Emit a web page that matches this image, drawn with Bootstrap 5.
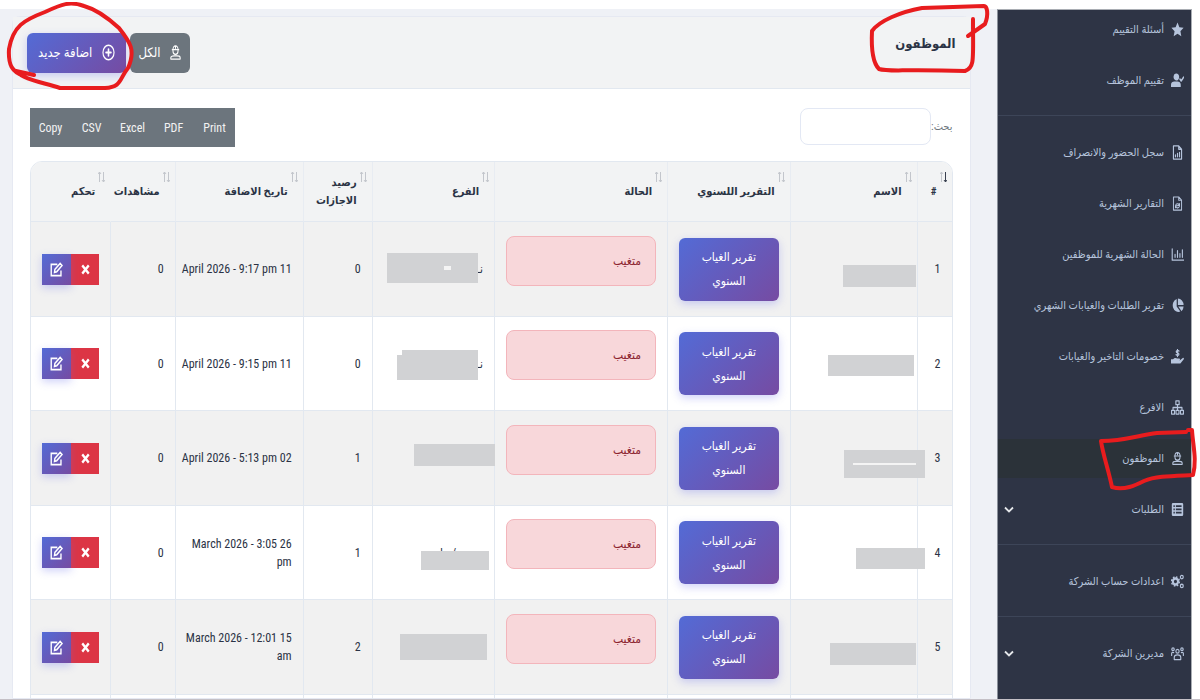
<!DOCTYPE html>
<html lang="ar" dir="rtl">
<head>
<meta charset="utf-8">
<meta name="viewport" content="width=device-width, initial-scale=1">
<title>الموظفون</title>
<link href="https://cdn.jsdelivr.net/npm/bootstrap@5.3.0/dist/css/bootstrap.min.css" rel="stylesheet">
<style>
:root{--ink:#2b3345;--line:#e2e8f0;--side:#2e3445;--grad:linear-gradient(135deg,#536bd6,#764ba2)}
body{font-family:"Roboto Condensed","Open Sans Condensed",Roboto,"DejaVu Sans Condensed","DejaVu Sans",sans-serif;font-size:12px;line-height:18px;color:var(--ink);background:#fff}
.app{height:100vh;overflow:hidden;padding-top:9px;padding-right:8px;border-bottom:1px solid #c4c0c6}
.side{width:16.4%;background:var(--side);border-top:1px solid #a9adb3;border-left:1px solid #8b919b;border-right:1px solid #a9adb3}
.side a{height:39px;margin-bottom:12px;padding:0 7px 0 6px;gap:7px;color:#b6c4dc;text-decoration:none;font-size:11px;white-space:nowrap}
.side a.active{background:#2b3239}
.side hr{margin:15px 0 17px;border-top:1px solid #3d4558;opacity:1}
.side svg.ico{width:13px;height:15px;flex:none}
.ico{fill:none;stroke:currentColor;stroke-width:1.4;stroke-linejoin:round;stroke-linecap:round}
.ico .f{fill:currentColor;stroke:none}
.main{background:#eff1f6;padding:7px 26px 0 12px;min-width:0}
.panel{border:1px solid #e6e9f2;border-radius:8px 8px 0 0;height:100%}
.panel-head{background:#f2f3f4;border-bottom:1px solid var(--line);height:72px;padding:0 14px}
.panel-title{font-size:13px;font-weight:700;line-height:20px;margin-top:-18px}
.hbtn{height:40px;border:0;border-radius:6px;color:#fff;font-size:13px;white-space:nowrap;padding:0 11px;gap:10px}
.hbtn.grey{padding:0 8px;gap:8px}
.hbtn svg.ico{width:13px;height:17px}
.grey{background:#6c757d}
.grad{background:var(--grad);box-shadow:0 3px 8px rgba(102,110,234,.3);color:#fff}
.panel-content{padding:19px 17px 0}
.find-label{font-size:11px}
.find{width:131px;height:37px;border:1px solid #e3e8f4;border-radius:8px}
.exports button{height:39px;width:41px;border:0;background:#6c757d;color:#f2f2f2;padding:0}
.staff{table-layout:fixed;border-collapse:separate;border-spacing:0;border:1px solid var(--line);border-radius:12px 12px 0 0;overflow:hidden;margin-top:14px}
.staff th{height:60px;background:#f2f3f4;font-size:11px;font-weight:700;padding:0 15px;vertical-align:middle;position:relative;border-bottom:1px solid var(--line);border-left:1px solid #e8ecf2;line-height:18px}
.staff th:last-child,.staff td:last-child{border-left:0}
.staff th:nth-child(8){border-left-color:#f2f3f4}
.staff th svg{position:absolute;top:9px;right:5px;width:7px;height:12px;color:#c3c6cc}
.staff td{height:94px;padding:0 11px;vertical-align:middle;position:relative;border-bottom:1px solid var(--line);border-left:1px solid var(--line)}
.staff td:nth-child(7){padding-left:2px}
.staff tbody tr:nth-child(odd) td{background:#f1f1f1;height:95px}
.report{border:0;border-radius:6px;width:100%;height:63px;line-height:24px;font-size:12px;padding:0}
.absent{height:50px;border:1px solid #f3b5bb;background:#f8d7da;color:#8c2530;border-radius:8px;margin-bottom:17px;padding:0 14px}
.act{height:31px;border:0;padding:0;color:#fff}
.act svg{width:13px;height:15px;display:block;margin:auto}
.del{width:28px;background:#dc3545}.edit{width:29px}
.cover{position:absolute;background:#d1d2d4;z-index:2}
.cover.gap-line{background:#f4f4f4}
.pen{position:absolute;z-index:5;fill:none;stroke:#e81c1e;stroke-width:4;stroke-linecap:round;stroke-linejoin:round;pointer-events:none}
</style>
</head>
<body>
<svg class="d-none">
<symbol id="worker" viewBox="-1 -1 18 18" preserveAspectRatio="none"><path d="M4.500 5V6.500a3.500 3.500 0 0 0 7 0V5M3.500 5h9M4.500 5a3.500 4 0 0 1 7 0M8 1v2.500M1.500 15v-1.500c0-2 2-2 4.500-2h4c2.500 0 4.500 0 4.500 2V15z"/></symbol>
<symbol id="sort" viewBox="0 0 7 12"><path d="M1.500 11V1M0 3l1.500-2L3 3" fill="none" stroke="currentColor" stroke-width="1"/><path d="M5.500 1v10M4 9l1.500 2L7 9" fill="none" stroke="var(--dn,currentColor)" stroke-width="1"/></symbol>
<symbol id="chev" viewBox="0 0 10 8"><path d="M1 1.500l4 4 4-4" fill="none" stroke="#e5e7ea" stroke-width="1.800"/></symbol>
<symbol id="pencil" viewBox="0 0 16 16" preserveAspectRatio="none"><path d="M9 2.500H1.500v12h12V9M5.500 11l.5-3 6.500-6.500 2.300 2.300L8.300 10.300z" fill="none" stroke="#fff" stroke-width="1.700"/></symbol>
<symbol id="cross" viewBox="0 0 16 16" preserveAspectRatio="none"><path d="M4 3.500l8 9M12 3.500l-8 9" stroke="#fff" stroke-width="2.800"/></symbol>
</svg>
<div class="app d-flex">
<nav class="side flex-shrink-0">
<a href="#" class="d-flex align-items-center"><svg class="ico" viewBox="0 0 16 16" preserveAspectRatio="none"><path class="f" d="M8 .5l2.300 5 5.200.6-3.900 3.700 1.100 5.500L8 12.500l-4.700 2.800 1.100-5.500L.5 6.100l5.200-.6z"/></svg>أسئلة التقييم</a>
<a href="#" class="d-flex align-items-center"><svg class="ico" viewBox="0 0 16 16" preserveAspectRatio="none"><path class="f" d="M6 8a3.500 3.800 0 1 0 0-7.500A3.500 3.800 0 0 0 6 8zM0 15v-2.500C0 10 2 9 4 9h4c2 0 4 1 4 3.500V15z"/><path d="M11 6.500l1.500 2 3-4" stroke-width="1.800"/></svg>تقييم الموظف</a>
<hr>
<a href="#" class="d-flex align-items-center"><svg class="ico" viewBox="0 0 16 16" preserveAspectRatio="none"><path d="M3 1h6.500L13 4.500V15H3zM9.500 1v3.500H13M5.500 12.500v-2M8 12.500V9M10.500 12.500V8"/></svg>سجل الحضور والانصراف</a>
<a href="#" class="d-flex align-items-center"><svg class="ico" viewBox="0 0 16 16" preserveAspectRatio="none"><path d="M3 1h6.500L13 4.500V15H3zM9.500 1v3.500H13M10.500 8v2H8.500M5.500 12.500v-2h2M5.700 10a2.500 2.300 0 0 1 4.600-.5M10.300 11a2.500 2.300 0 0 1-4.600.5" stroke-width="1.200"/></svg>التقارير الشهرية</a>
<a href="#" class="d-flex align-items-center"><svg class="ico" viewBox="0 0 16 16" preserveAspectRatio="none"><path d="M1.500 2v12h14M5 11V8M8 11V4M11 11V7M14 11V3"/></svg>الحالة الشهرية للموظفين</a>
<a href="#" class="d-flex align-items-center"><svg class="ico" viewBox="0 0 16 16" preserveAspectRatio="none"><path class="f" d="M7 1v8l4.500 5.500A7 7 0 1 1 7 1zM8.500.5A7 7 0 0 1 15.500 7.500h-7zM9 9h6.500a7 7 0 0 1-2.500 5z"/></svg>تقرير الطلبات والغيابات الشهري</a>
<a href="#" class="d-flex align-items-center"><svg class="ico" viewBox="0 0 16 16" preserveAspectRatio="none"><path class="f" d="M0 11h2.500c2-2 4-1.500 5-.8h2.500c1.500 0 1.500 1.800 0 1.800H7.500h3.500l3.500-2.500c1-.5 2 .8 1 1.600L11.500 15.500H0z"/><path d="M9.800 2.200C8.500 1.200 6.300 1.500 6.500 3s3.300 1 3.300 2.500S7.500 7 6.200 6M8 .5v7.500"/></svg>خصومات التاخير والغيابات</a>
<a href="#" class="d-flex align-items-center"><svg class="ico" viewBox="0 0 16 16" preserveAspectRatio="none"><path d="M6 1h4v4H6zM.7 11h3.600v4H.7zM6.200 11h3.600v4H6.200zM11.700 11h3.600v4h-3.600zM8 5v6M2.500 11V8h11v3"/></svg>الافرع</a>
<a href="#" class="d-flex align-items-center active position-relative"><svg class="ico"><use href="#worker"/></svg>الموظفون
<svg class="pen" style="right:-8px;top:-13px" width="104" height="66" viewBox="1096 426 104 66"><path d="M1187 432L1158 433C1140 435 1125 441 1102 441C1104 455 1109 468 1113 487C1125 491 1137 485 1145 481C1157 476 1174 476 1194 475C1198 460 1194 446 1193 430L1189 430"/></svg></a>
<a href="#" class="d-flex align-items-center"><svg class="ico" viewBox="0 0 16 16" preserveAspectRatio="none"><path class="f" fill-rule="evenodd" d="M2.500 1h11a1.500 1.500 0 0 1 1.500 1.500v11a1.500 1.500 0 0 1-1.500 1.500h-11A1.500 1.500 0 0 1 1 13.500v-11A1.500 1.500 0 0 1 2.500 1zM3 3.500v1.700h1.700V3.500zm3 0v1.700h7V3.500zM3 7v1.700h1.700V7zm3 0v1.700h7V7zM3 10.500v1.700h1.700v-1.700zm3 0v1.700h7v-1.700z"/></svg>الطلبات<svg class="me-auto" width="10" height="8"><use href="#chev"/></svg></a>
<hr>
<a href="#" class="d-flex align-items-center"><svg class="ico" viewBox="0 0 16 16" preserveAspectRatio="none"><circle cx="5.500" cy="8" r="3.200" stroke-width="2.600"/><circle cx="5.500" cy="8" r="4.800" stroke-width="1.800" stroke-dasharray="1.900 1.870" stroke-linecap="butt"/><circle cx="13.300" cy="3.300" r="1.800"/><circle cx="13.300" cy="12.700" r="1.800"/></svg>اعدادات حساب الشركة</a>
<hr>
<a href="#" class="d-flex align-items-center"><svg class="ico" viewBox="0 0 16 16" preserveAspectRatio="none"><circle cx="8" cy="5.500" r="2"/><circle cx="2.500" cy="3.500" r="1.500"/><circle cx="13.500" cy="3.500" r="1.500"/><path d="M4 14.500V12c0-2 1.500-2.500 4-2.500s4 .5 4 2.500v2.500zM.8 10V8c0-1 1-1.500 2.500-1M15.200 10V8c0-1-1-1.500-2.500-1"/></svg>مديرين الشركة<svg class="me-auto" width="10" height="8"><use href="#chev"/></svg></a>
</nav>
<main class="main flex-grow-1">
<section class="panel bg-white">
<header class="panel-head d-flex justify-content-between align-items-center">
<h1 class="panel-title mb-0 position-relative">الموظفون
<svg class="pen" style="right:-34px;top:-32px" width="124" height="74" viewBox="866 1 124 74"><path d="M968 35L985 23C989 13 987 5 984 5L922 7C900 11 879 20 872 30C871 50 873 62 879 68C888 71 900 68 965 70C975 67 973 58 973 18"/></svg></h1>
<div class="d-flex gap-1">
<button class="hbtn grey d-flex align-items-center"><svg class="ico"><use href="#worker"/></svg>الكل</button>
<button class="hbtn grad d-flex align-items-center position-relative"><svg class="ico" viewBox="0 0 16 16" preserveAspectRatio="none"><circle cx="8" cy="8" r="6.800"/><path d="M8 5v6M5 8h6" stroke-width="2"/></svg>اضافة جديد
<svg class="pen" style="left:-21px;top:-31px" width="132" height="90" viewBox="6 2 132 90"><path d="M34 75L16 71C24 80 42 82 60 88H105C122 87 119 79 128 68C136 50 130 42 119 28C107 17 95 9 84 6C70 1 62 4 45 12C24 20 13 26 9 49C8 65 12 72 24 76"/></svg></button>
</div>
</header>
<div class="panel-content">
<div class="d-flex justify-content-between align-items-start">
<div class="d-flex align-items-center text-secondary"><label for="q" class="find-label">بحث:</label><input id="q" type="search" class="find"></div>
<div class="exports d-flex" dir="ltr"><button>Copy</button><button>CSV</button><button>Excel</button><button>PDF</button><button>Print</button></div>
</div>
<table class="staff w-100">
<colgroup><col style="width:3.8%"><col style="width:13.8%"><col style="width:13.3%"><col style="width:18.8%"><col style="width:13.3%"><col style="width:7.5%"><col style="width:13.9%"><col style="width:7%"><col style="width:8.6%"></colgroup>
<thead><tr>
<th>#<svg style="--dn:#39404f"><use href="#sort"/></svg></th><th>الاسم<svg><use href="#sort"/></svg></th><th>التقرير اللسنوي<svg><use href="#sort"/></svg></th><th>الحالة<svg><use href="#sort"/></svg></th><th>الفرع<svg><use href="#sort"/></svg></th><th>رصيد الاجازات<svg><use href="#sort"/></svg></th><th>تاريخ الاضافة<svg><use href="#sort"/></svg></th><th>مشاهدات<svg><use href="#sort"/></svg></th><th>تحكم<svg><use href="#sort"/></svg></th>
</tr></thead>
<tbody id="rows"></tbody>
</table>
</div>
</section>
</main>
</div>
<script>
// covers: [right, top, width, height, class] inside the cell
const rows=[
 ['11 April 2026 - 9:17 pm',0,[[1,43,73,22]],'نـ',[[16,31,91,30],[43,44,7,4,'gap-line']]],
 ['11 April 2026 - 9:15 pm',0,[[3,38,86,21]],'نـ',[[16,33,76,30],[16,38,81,25]]],
 ['02 April 2026 - 5:13 pm',1,[[-8,39,81,28],[1,52,63,2,'gap-line']],'',[[-1,33,81,22]]],
 ['26 March 2026 - 3:05 pm',1,[[-8,42,69,21]],'نمرية / ماد',[[5,45,68,19]]],
 ['15 March 2026 - 12:01 am',2,[[1,43,86,22]],'',[[7,34,87,26]]]];
const cover=l=>l.map(c=>`<span class="cover ${c[4]||''}" style="right:${c[0]}px;top:${c[1]}px;width:${c[2]}px;height:${c[3]}px"></span>`).join('');
document.getElementById('rows').innerHTML=rows.map((r,i)=>`<tr>
<td>${i+1}</td><td>${cover(r[2])}</td>
<td><button class="report grad">تقرير الغياب<br>السنوي</button></td>
<td><div class="absent d-flex align-items-center">متغيب</div></td>
<td>${r[3]}${cover(r[4])}</td><td>${r[1]}</td><td>${r[0]}</td><td>0</td>
<td><div class="d-flex"><button class="act del" aria-label="حذف"><svg><use href="#cross"/></svg></button><button class="act edit grad" aria-label="تعديل"><svg><use href="#pencil"/></svg></button></div></td></tr>`).join('')+`<tr>${'<td></td>'.repeat(9)}</tr>`;
</script>
<script src="https://cdn.jsdelivr.net/npm/bootstrap@5.3.0/dist/js/bootstrap.bundle.min.js"></script>
</body>
</html>
